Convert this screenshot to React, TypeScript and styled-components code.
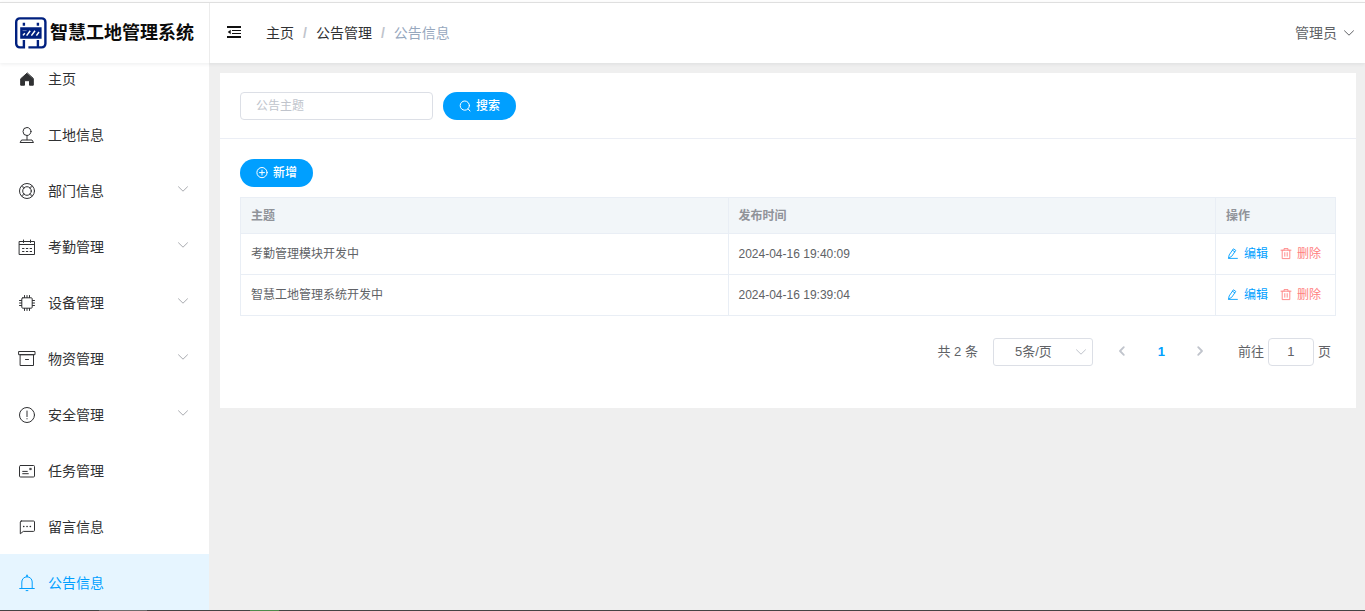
import React from 'react';
import styled, { createGlobalStyle } from 'styled-components';

const blue = '#009fff';
const line = '#e9eef5';

const GlobalStyle = createGlobalStyle`
  *, *::before, *::after { box-sizing: border-box; }
  body {
    margin: 0;
    background: #fff;
    font-family: "Liberation Sans", "Noto Sans CJK SC", sans-serif;
    font-size: 14px;
    color: #303133;
  }
  button, input, select { font-family: inherit; margin: 0; }
  a { color: inherit; text-decoration: none; }
  svg { display: block; flex: none; }
`;

const Page = styled.div`
  display: flex;
  flex-direction: column;
  height: 100vh;
  padding-top: 2px;
`;

const Header = styled.header`
  position: relative;
  z-index: 1;
  display: flex;
  flex: none;
  height: 61px;
  border-top: 1px solid #dfdfdf;
  background: #fff;
  box-shadow: 0 1px 4px rgba(0, 21, 41, 0.08);
`;

const Brand = styled.a`
  display: flex;
  align-items: center;
  gap: 3px;
  width: 210px;
  padding-left: 15px;
  border-right: 1px solid #ececec;
  color: #0b0b0b;
  font-size: 18px;
  font-weight: 700;
  line-height: 24px;
  white-space: nowrap;
`;

const Toolbar = styled.div`
  display: flex;
  flex: 1;
  align-items: center;
  padding: 0 10px 0 17px;
`;

const IconButton = styled.button`
  display: flex;
  padding: 0 0 2px;
  border: 0;
  background: none;
  color: #111;
  cursor: pointer;
`;

const Breadcrumb = styled.nav`
  display: flex;
  align-items: center;
  flex: 1;
  margin-left: 25px;
  line-height: 20px;
`;

const Separator = styled.span`
  margin: 0 9px;
  color: #c0c4cc;
  font-weight: 700;
`;

const Current = styled.span`
  color: #97a8be;
`;

const UserButton = styled.button`
  display: flex;
  align-items: center;
  gap: 6px;
  padding: 0;
  border: 0;
  background: none;
  color: #606266;
  font-size: 14px;
  line-height: 20px;
  cursor: pointer;
`;

const Body = styled.div`
  display: flex;
  flex: 1;
  min-height: 0;
`;

const Sidebar = styled.aside`
  flex: none;
  width: 209px;
  overflow: hidden;
  background: #fff;
`;

const Menu = styled.ul`
  margin: -13px 0 0;
  padding: 0;
  list-style: none;
`;

const MenuLink = styled.a<{ $active?: boolean }>`
  display: flex;
  align-items: center;
  height: 56px;
  padding: 2px 20px 0 18px;
  background: ${p => (p.$active ? '#e6f5ff' : '#fff')};
  color: ${p => (p.$active ? blue : '#303133')};
  line-height: 20px;
`;

const MenuLabel = styled.span`
  flex: 1;
  margin-left: 12px;
`;

const MenuArrow = styled.span`
  margin-bottom: 4px;
  color: #a9abb0;
`;

const Main = styled.main`
  flex: 1;
  min-width: 0;
  padding: 10px 9px 10px 11px;
  background: #efefef;
`;

const Card = styled.section`
  background: #fff;
`;

const SearchForm = styled.form`
  display: flex;
  gap: 10px;
  padding: 19px 20px 18px;
  border-bottom: 1px solid #ebeef5;
`;

const SearchInput = styled.input`
  width: 193px;
  height: 28px;
  padding: 0 15px;
  border: 1px solid #dcdfe6;
  border-radius: 4px;
  color: #606266;
  font-size: 12px;
  &::placeholder { color: #c0c4cc; opacity: 1; }
`;

const PrimaryButton = styled.button`
  display: flex;
  align-items: center;
  justify-content: center;
  gap: 5px;
  width: 73px;
  height: 28px;
  padding: 0;
  border: 0;
  border-radius: 14px;
  background: ${blue};
  color: #fff;
  font-size: 12px;
  font-weight: 500;
  line-height: 16px;
  cursor: pointer;
`;

const Content = styled.div`
  padding: 20px 20px 42px;
`;

const Table = styled.table`
  width: 100%;
  margin-top: 10px;
  border: solid ${line};
  border-width: 1px 0 0 1px;
  border-spacing: 0;
  table-layout: fixed;
  color: #606266;
  font-size: 12px;
  line-height: 20px;
  th, td {
    padding: 0 10px;
    border: solid ${line};
    border-width: 0 1px 1px 0;
    text-align: left;
  }
  th {
    height: 36px;
    background: #f2f6f9;
    color: #909399;
    font-weight: 700;
  }
  td { height: 41px; }
`;

const ActionHead = styled.th`
  width: 120px;
`;

const Actions = styled.div`
  display: flex;
  gap: 12px;
  padding-left: 1px;
`;

const TextButton = styled.button<{ $danger?: boolean }>`
  display: flex;
  align-items: center;
  gap: 5px;
  padding: 0;
  border: 0;
  background: none;
  color: ${p => (p.$danger ? '#ff8080' : blue)};
  font-size: 12px;
  line-height: 20px;
  white-space: nowrap;
  cursor: pointer;
`;

const Pagination = styled.nav`
  display: flex;
  align-items: center;
  justify-content: flex-end;
  margin-top: 22px;
  padding-right: 5px;
  color: #606266;
  font-size: 13px;
  line-height: 28px;
`;

const SizeBox = styled.div`
  position: relative;
  width: 100px;
  margin: 0 10px 0 15px;
  color: #c0c4cc;
  svg {
    position: absolute;
    top: 8px;
    right: 6px;
    pointer-events: none;
  }
`;

const SizeSelect = styled.select`
  display: block;
  width: 100%;
  height: 28px;
  padding: 0 25px 2px 21px;
  appearance: none;
  border: 1px solid #dcdfe6;
  border-radius: 3px;
  background: #fff;
  color: #606266;
  font-size: 13px;
`;

const PageButton = styled.button<{ $current?: boolean }>`
  display: flex;
  align-items: center;
  justify-content: center;
  width: 39px;
  height: 28px;
  padding: 0 0 2px;
  border: 0;
  background: none;
  color: ${p => (p.$current ? blue : '#c0c4cc')};
  font-size: 13px;
  font-weight: 700;
`;

const Jump = styled.label`
  display: flex;
  gap: 4px;
  margin-left: 18px;
`;

const JumpInput = styled.input`
  width: 46px;
  height: 28px;
  padding: 0 3px 2px;
  border: 1px solid #dcdfe6;
  border-radius: 4px;
  color: #606266;
  font-size: 13px;
  text-align: center;
`;

const Svg = ({ size = 18, width = 1, children }: { size?: number; width?: number; children: React.ReactNode }) => (
  <svg
    width={size}
    height={size}
    viewBox={`0 0 ${size} ${size}`}
    fill="none"
    stroke="currentColor"
    strokeWidth={width}
    strokeLinecap="round"
    strokeLinejoin="round"
    aria-hidden="true"
  >
    {children}
  </svg>
);

const Chevron = () => (
  <Svg size={12}>
    <path d="M1.5 3.8 6 8.2l4.5-4.4" />
  </Svg>
);

const Logo = () => (
  <svg width="32" height="32" viewBox="0 0 32 32" fill="none" aria-hidden="true">
    <path
      d="M8.9 23v7.4H4.8A3.6 3.6 0 0 1 1.2 26.8V5A3.6 3.6 0 0 1 4.8 1.4h22A3.6 3.6 0 0 1 30.4 5v21.8a3.6 3.6 0 0 1-3.6 3.6H13.4"
      stroke="#00207f"
      strokeWidth="2.4"
    />
    <path d="M22.9 23v7" stroke="#00207f" strokeWidth="2.4" />
    <path d="M7.7 5.8h2.4v3H7.7zM21.7 5.8h2.4v3h-2.4zM5.2 10.2h21.4v11.6H5.2z" fill="#00207f" />
    <path d="m8 18.4 1.8-2.2M11.6 18.6l3.6-4.8M16.4 18.6l3.6-4.8M21.4 18.6l2.6-3.6" stroke="#fff" strokeWidth="1.5" />
    <path d="M7.6 13.6h4" stroke="#fff" strokeOpacity="0.5" strokeWidth="0.8" />
  </svg>
);

const FoldIcon = () => (
  <svg width="14" height="14" viewBox="0 0 14 14" fill="currentColor" aria-hidden="true">
    <path d="M0 1h14v2H0zM5 5h9v1H5zM5 8h9v1H5zM0 11h14v2H0zM3.7 4.7v4.6L.7 7z" />
  </svg>
);

const icons: Record<string, React.ReactNode> = {
  home: (
    <path
      d="M9 3.2 2.7 8.8v6.4h3.8v-4.5h5v4.5h3.8V8.8z"
      fill="currentColor"
    />
  ),
  stamp: (
    <>
      <circle cx="9" cy="5.5" r="4" />
      <path d="M9 9.5v4.3M4 14h10l1.5 2.5h-13z" />
    </>
  ),
  help: (
    <>
      <circle cx="9" cy="9" r="7.5" />
      <circle cx="9" cy="9" r="4.3" />
      <path d="m4 4 2 2M14 4l-2 2M4 14l2-2M14 14l-2-2" strokeWidth="1.6" strokeOpacity="0.6" />
    </>
  ),
  calendar: (
    <>
      <path d="M1.5 3.5h15v13h-15zM1.5 6.5h15M5.5 2v2.5M12.5 2v2.5" />
      <path d="M4.5 10.5H6m2.3 0h1.5m2.3 0h1.5M4.5 13.5H6m2.3 0h1.5m2.3 0h1.5" />
    </>
  ),
  cpu: (
    <>
      <rect x="3.8" y="3.8" width="10.4" height="10.4" rx="1" />
      <path d="M6.5 1.5v2M9 1.5v2m2.5-2v2m-5 11v2m2.5-2v2m2.5-2v2m-10-10h2M1.5 9h2m-2 2.5h2m11-5h2m-2 2.5h2m-2 2.5h2" />
    </>
  ),
  box: (
    <>
      <path d="M1 1.5h16v3.2H1zM2.5 4.7h13v10.8h-13z" />
      <path d="M7.5 9.5h3" />
    </>
  ),
  warning: (
    <>
      <circle cx="9" cy="9" r="7.5" />
      <path d="M9 5v5.6M9 12.6v.3" />
    </>
  ),
  postcard: (
    <>
      <rect x="1.5" y="3.5" width="15" height="11.5" rx="1" />
      <path d="M4.7 9.4h4.6M4.7 11.7h5.6" />
      <path d="M11.9 6.3h1.4v1.4h-1.4z" fill="currentColor" strokeWidth="0.6" />
    </>
  ),
  chat: (
    <>
      <path d="M3.3 3h12.2a1 1 0 0 1 1 1v8.4a1 1 0 0 1-1 1H5.3l-3 2.4V4a1 1 0 0 1 1-1z" />
      <path d="M5.7 8.5h.1M9 8.5h.1M12.3 8.5h.1" strokeWidth="1.6" />
    </>
  ),
  bell: (
    <>
      <path d="M1.7 14.5h14.6M3.8 14.5V8a5.2 5.2 0 0 1 10.4 0v6.5M8.1 16.6h1.8" />
      <path d="M9 1.2v1.4" strokeWidth="1.5" />
    </>
  ),
};

const menu = [
  { label: '主页', icon: 'home' },
  { label: '工地信息', icon: 'stamp' },
  { label: '部门信息', icon: 'help', nested: true },
  { label: '考勤管理', icon: 'calendar', nested: true },
  { label: '设备管理', icon: 'cpu', nested: true },
  { label: '物资管理', icon: 'box', nested: true },
  { label: '安全管理', icon: 'warning', nested: true },
  { label: '任务管理', icon: 'postcard' },
  { label: '留言信息', icon: 'chat' },
  { label: '公告信息', icon: 'bell', active: true },
];

const notices = [
  { title: '考勤管理模块开发中', time: '2024-04-16 19:40:09' },
  { title: '智慧工地管理系统开发中', time: '2024-04-16 19:39:04' },
];

const BottomEdge = styled.footer`
  display: flex;
  flex: none;
  height: 1px;
  padding-left: 99px;
  gap: 103px;
  background: #444;
`;

const EdgeMark = styled.span<{ $color: string; $width: number }>`
  width: ${p => p.$width}px;
  background: ${p => p.$color};
`;

export default function App() {
  return (
    <Page>
      <GlobalStyle />
      <Header>
        <Brand href="#">
          <Logo />
          智慧工地管理系统
        </Brand>
        <Toolbar>
          <IconButton type="button" aria-label="折叠菜单">
            <FoldIcon />
          </IconButton>
          <Breadcrumb>
            <a href="#">主页</a>
            <Separator>/</Separator>
            <a href="#">公告管理</a>
            <Separator>/</Separator>
            <Current>公告信息</Current>
          </Breadcrumb>
          <UserButton type="button">
            管理员
            <Chevron />
          </UserButton>
        </Toolbar>
      </Header>
      <Body>
        <Sidebar>
          <Menu>
            {menu.map(item => (
              <li key={item.label}>
                <MenuLink href="#" $active={item.active}>
                  <Svg>{icons[item.icon]}</Svg>
                  <MenuLabel>{item.label}</MenuLabel>
                  {item.nested && (
                    <MenuArrow>
                      <Chevron />
                    </MenuArrow>
                  )}
                </MenuLink>
              </li>
            ))}
          </Menu>
        </Sidebar>
        <Main>
          <Card>
            <SearchForm onSubmit={e => e.preventDefault()}>
              <SearchInput type="text" placeholder="公告主题" aria-label="公告主题" />
              <PrimaryButton type="submit">
                <Svg size={12}>
                  <circle cx="5.8" cy="5.6" r="4.6" />
                  <path d="m9.2 9 1.8 2" />
                </Svg>
                搜索
              </PrimaryButton>
            </SearchForm>
            <Content>
              <PrimaryButton type="button">
                <Svg size={12}>
                  <circle cx="6" cy="5.6" r="5.1" />
                  <path d="M3.5 5.6h5M6 3.1v5" />
                </Svg>
                新增
              </PrimaryButton>
              <Table>
                <thead>
                  <tr>
                    <th>主题</th>
                    <th>发布时间</th>
                    <ActionHead>操作</ActionHead>
                  </tr>
                </thead>
                <tbody>
                  {notices.map(notice => (
                    <tr key={notice.time}>
                      <td>{notice.title}</td>
                      <td>{notice.time}</td>
                      <td>
                        <Actions>
                          <TextButton type="button">
                            <Svg size={12} width={0.9}>
                              <path d="M2.4 6.6 6.4.8l2.4 1.6-4 5.8-3 1.9zM5.4 2.2l2.4 1.6M1.8 10.4h8.6" />
                            </Svg>
                            编辑
                          </TextButton>
                          <TextButton type="button" $danger>
                            <Svg size={12} width={0.9}>
                              <path d="M1 2.2h10M4 2.2V.6h4v1.6M2.2 2.2v8.4h7.6V2.2M4.8 4.6v3.6M7.2 4.6v3.6" />
                            </Svg>
                            删除
                          </TextButton>
                        </Actions>
                      </td>
                    </tr>
                  ))}
                </tbody>
              </Table>
              <Pagination aria-label="分页">
                <span>共 2 条</span>
                <SizeBox>
                  <SizeSelect aria-label="每页条数" defaultValue="5">
                    <option value="5">5条/页</option>
                    <option value="10">10条/页</option>
                  </SizeSelect>
                  <Chevron />
                </SizeBox>
                <PageButton type="button" aria-label="上一页">
                  <Svg size={12} width={1.8}>
                    <path d="M7.8 2.2 4 6l3.8 3.8" />
                  </Svg>
                </PageButton>
                <PageButton type="button" $current>
                  1
                </PageButton>
                <PageButton type="button" aria-label="下一页">
                  <Svg size={12} width={1.8}>
                    <path d="M4.2 2.2 8 6 4.2 9.8" />
                  </Svg>
                </PageButton>
                <Jump>
                  前往
                  <JumpInput type="text" defaultValue="1" />
                  页
                </Jump>
              </Pagination>
            </Content>
          </Card>
        </Main>
      </Body>
      <BottomEdge>
        <EdgeMark $color="#6c6c6c" $width={48} />
        <EdgeMark $color="#4e8a4a" $width={29} />
      </BottomEdge>
    </Page>
  );
}
